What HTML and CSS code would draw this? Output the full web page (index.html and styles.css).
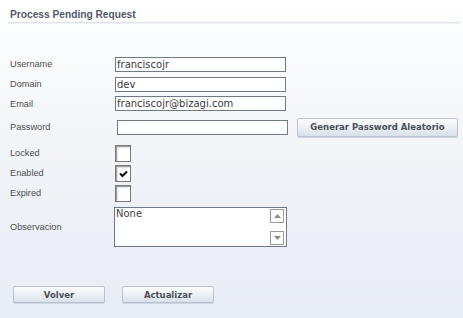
FILE: index.html
```html
<!DOCTYPE html>
<html>
<head>
<meta charset="utf-8">
<link rel="stylesheet" href="styles.css">
</head>
<body>
<div class="page">
  <h1 class="title">Process Pending Request</h1>
  <div class="form">
    <div class="row">
      <span class="label">Username</span>
      <span class="input">franciscojr</span>
    </div>
    <div class="row">
      <span class="label">Domain</span>
      <span class="input">dev</span>
    </div>
    <div class="row row-short">
      <span class="label">Email</span>
      <span class="input">franciscojr@bizagi.com</span>
    </div>
    <div class="row row-pass">
      <span class="label">Password</span>
      <span class="input input-pass"></span>
      <span class="btn btn-gen">Generar Password Aleatorio</span>
    </div>
    <div class="row">
      <span class="label">Locked</span>
      <span class="check"></span>
    </div>
    <div class="row">
      <span class="label">Enabled</span>
      <span class="check"><svg width="9" height="8" viewBox="0 0 9 8"><path d="M1 3.5 L3.5 6 L8 1.5" fill="none" stroke="#111" stroke-width="2"/></svg></span>
    </div>
    <div class="row">
      <span class="label">Expired</span>
      <span class="check"></span>
    </div>
    <div class="row row-obs">
      <span class="label">Observacion</span>
      <div class="textarea">
        <span class="ta-text">None</span>
        <div class="scroll">
          <span class="sbtn"><svg width="7" height="4" viewBox="0 0 7 4"><path d="M0 4 L3.5 0 L7 4Z" fill="#8a8a8a"/></svg></span>
          <span class="sbtn"><svg width="7" height="4" viewBox="0 0 7 4"><path d="M0 0 L3.5 4 L7 0Z" fill="#8a8a8a"/></svg></span>
        </div>
      </div>
    </div>
  </div>
  <div class="actions">
    <span class="btn btn-act">Volver</span>
    <span class="btn btn-act">Actualizar</span>
  </div>
</div>
</body>
</html>
```
FILE: styles.css
```css
html, body {
  margin: 0;
  padding: 0;
}
body {
  width: 463px;
  height: 318px;
  overflow: hidden;
  background: linear-gradient(to bottom, #ffffff 0px, #fbfcfd 40px, #eef1f6 200px, #e8ecf4 318px);
  font-family: "Liberation Sans", Arial, sans-serif;
}
.page {
  padding: 0 3px 0 8px;
}
.title {
  margin: 0;
  padding: 9px 0 0 2px;
  height: 13px;
  font-size: 10.2px;
  font-weight: bold;
  color: #535a68;
  border-bottom: 1px solid #dfe2e6;
  box-shadow: 0 1px 0 #f1f2f4;
}
.form {
  margin-top: 31px;
  padding-left: 2px;
}
.row {
  display: flex;
  align-items: center;
  height: 20px;
}
.row-short { height: 19px; }
.row-pass { height: 22px; margin-top: 3px; margin-bottom: 5px; }
.row-obs { height: 43px; margin-top: 2px; }
.label {
  width: 105px;
  font-size: 9.2px;
  color: #505050;
}
.input {
  box-sizing: border-box;
  width: 171px;
  height: 15px;
  border: 1px solid #6f7a88;
  background: #fff;
  font-family: "DejaVu Sans", sans-serif;
  font-size: 10px;
  line-height: 13px;
  color: #3a3a3a;
  padding-left: 1px;
}
.input-pass {
  margin-left: 2px;
  height: 15px;
}
.btn {
  box-sizing: border-box;
  display: flex;
  align-items: center;
  justify-content: center;
  border: 1px solid #b9c2ce;
  border-radius: 2px;
  background: linear-gradient(to bottom, #fbfcfd 0%, #eef2f6 45%, #d9e0e9 100%);
  font-family: "DejaVu Sans", sans-serif;
  font-weight: bold;
  font-size: 8.5px;
  color: #4b4f58;
  box-shadow: 0 1px 0 #d0d6df;
}
.btn-gen {
  margin-left: 9px;
  width: 161px;
  height: 19px;
}
.check {
  box-sizing: border-box;
  width: 16px;
  height: 17px;
  border: 1px solid #7a7a7a;
  background: #fff;
  box-shadow: inset 1px 1px 0 #a0a0a0, inset 2px 2px 0 #e4e4e4;
  display: flex;
  align-items: center;
  justify-content: center;
  padding: 1px 0 0 1px;
}
.textarea {
  box-sizing: border-box;
  margin-left: -1px;
  width: 173px;
  height: 40px;
  border: 1px solid #6f7a88;
  background: #fff;
  display: flex;
  justify-content: space-between;
}
.ta-text {
  font-family: "DejaVu Sans", sans-serif;
  font-size: 10px;
  color: #444;
  padding: 0 0 0 1px;
  line-height: 12px;
}
.scroll {
  display: flex;
  flex-direction: column;
  justify-content: space-between;
  padding: 1px 2px 1px 0;
}
.sbtn {
  box-sizing: border-box;
  width: 14px;
  height: 14px;
  border: 1px solid #9a9a9a;
  background: #fdfdfd;
  display: flex;
  align-items: center;
  justify-content: center;
}
.actions {
  display: flex;
  gap: 17px;
  margin-top: 38px;
  padding-left: 5px;
}
.btn-act {
  width: 92px;
  height: 17px;
}
```
